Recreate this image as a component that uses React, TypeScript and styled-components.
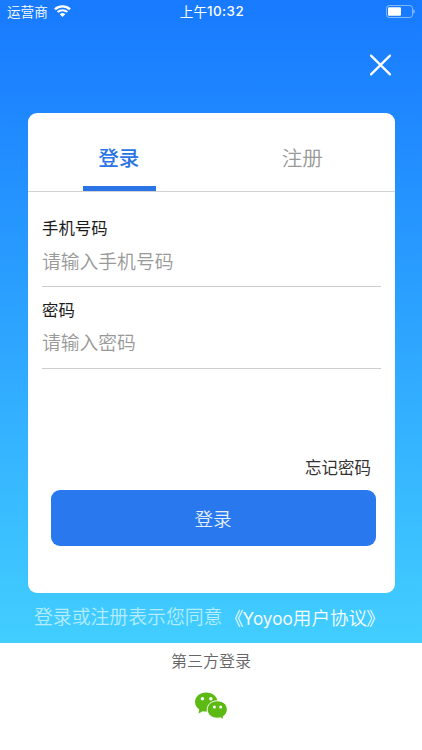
import React, { useState } from "react";
import styled, { createGlobalStyle } from "styled-components";

const Global = createGlobalStyle`
  * { box-sizing: border-box; }
  body { margin: 0; background: #fff; font-family: "Noto Sans CJK SC", sans-serif; }
  button, input { font: inherit; border: 0; background: none; padding: 0; margin: 0; }
`;

const Screen = styled.div`
  width: 422px;
  height: 750px;
  display: flex;
  flex-direction: column;
  overflow: hidden;
  background: #fff;
`;

const Hero = styled.main`
  height: 643px;
  display: flex;
  flex-direction: column;
  background: linear-gradient(#187aff 0%, #1f88ff 18%, #42ceff 100%);
`;

const StatusBar = styled.header`
  height: 24px;
  padding: 0 7px 2px 7px;
  display: grid;
  grid-template-columns: 1fr auto 1fr;
  align-items: center;
  color: #fff;
  font-size: 13.6px;
  line-height: 22px;
`;

const Carrier = styled.div`
  display: flex;
  align-items: center;
  gap: 6.5px;
  font-weight: 350;
`;

const Clock = styled.time`
  display: flex;
  padding-left: 2px;
  font-weight: 400;
`;

const Digits = styled.span`
  font-family: Inter, sans-serif;
  font-weight: 500;
  font-size: 13.4px;
  letter-spacing: 0.45px;
`;

const BatterySlot = styled.div`
  display: flex;
  justify-content: flex-end;
`;

const TopActions = styled.div`
  height: 89px;
  padding: 28px 29px 0 0;
  display: flex;
  justify-content: flex-end;
  align-items: flex-start;
`;

const CloseButton = styled.button`
  display: flex;
  width: 25px;
  height: 25px;
`;

const Card = styled.section`
  width: 367px;
  height: 479.5px;
  margin-left: 28px;
  border-radius: 9px;
  background: #fff;
  display: flex;
  flex-direction: column;
`;

const Tabs = styled.nav`
  height: 79px;
  display: grid;
  grid-template-columns: 1fr 1fr;
  border-bottom: 1.5px solid #d2d2d2;
`;

const Tab = styled.button<{ $active: boolean }>`
  display: flex;
  flex-direction: column;
  align-items: center;
  justify-content: space-between;
  padding-top: 29px;
  font-size: 20.6px;
  line-height: 30px;
  font-weight: ${(p) => (p.$active ? 500 : 350)};
  color: ${(p) => (p.$active ? "#2a74e6" : "#999")};

  &::after {
    content: "";
    width: 73px;
    height: 5px;
    background: ${(p) => (p.$active ? "#2a74e6" : "transparent")};
  }
`;

const TabLabel = styled.span`
  padding-right: 2px;
`;

const Fields = styled.div`
  padding: 21px 14px 0;
`;

const Field = styled.label`
  display: flex;
  flex-direction: column;
  height: 81.5px;
`;

const FieldName = styled.span`
  font-size: 16.4px;
  line-height: 28px;
  color: #1c1c1c;
`;

const Input = styled.input`
  width: 100%;
  height: 46px;
  padding: 0 0 6.5px;
  outline: 0;
  border-bottom: 1px solid #cdcdcd;
  font-size: 18.8px;
  font-weight: 350;
  color: #222;

  &::placeholder { color: #999; opacity: 1; }
`;

const Forgot = styled.button`
  align-self: flex-end;
  margin: 79px 24px 0 0;
  font-size: 16.5px;
  line-height: 24px;
  color: #333;
`;

const Submit = styled.button`
  width: 325px;
  height: 56px;
  margin: 11px auto 0 22.5px;
  padding-bottom: 1px;
  border-radius: 9px;
  background: #2978ed;
  color: #e4f0ff;
  font-size: 18.6px;
  font-weight: 350;
`;

const Terms = styled.p`
  margin: 0;
  padding: 8px 0 0 34px;
  display: flex;
  font-size: 18.85px;
  line-height: 30px;
  white-space: nowrap;
  font-weight: 350;
  color: #b3edff;
`;

const Agreement = styled.span`
  padding-top: 1px;
  margin-left: 2.5px;
  font-size: 18.6px;
  color: #f4fdff;
`;

const OpeningMark = styled.span`
  letter-spacing: -1px;
`;

const ClosingMark = styled.span`
  margin-left: -1px;
`;

const Latin = styled.span`
  font-family: Inter, sans-serif;
  font-weight: 400;
  font-size: 17.2px;
`;

const ThirdParty = styled.footer`
  height: 107px;
  padding-top: 5px;
  display: flex;
  flex-direction: column;
  align-items: center;
  font-size: 16px;
  line-height: 24px;
  font-weight: 350;
  color: #666;
`;

const WechatButton = styled.button`
  display: flex;
  margin-top: 20px;
`;

const WifiIcon = () => (
  <svg width="17" height="12" viewBox="0 0 16 12" preserveAspectRatio="none" fill="none" stroke="#fff">
    <path d="M.9 4.4a10 10 0 0 1 14.2 0" strokeWidth="2.3" />
    <path d="M3.5 7.1a6.4 6.4 0 0 1 9 0" strokeWidth="2.1" />
    <path d="M8 12 5.4 9.3a3.7 3.7 0 0 1 5.2 0Z" fill="#fff" stroke="none" />
  </svg>
);

const BatteryIcon = () => (
  <svg width="30" height="13" viewBox="0 0 30 13">
    <rect x="1.5" y="0.5" width="26" height="12" rx="2.8" fill="none" stroke="#fff" strokeOpacity="0.45" />
    <rect x="3" y="2.2" width="13" height="8.6" rx="1" fill="#fff" />
    <path d="M28.4 4.3c1.7.7 1.7 3.7 0 4.4Z" fill="#fff" fillOpacity="0.6" />
  </svg>
);

const CloseIcon = () => (
  <svg width="25" height="25" viewBox="0 0 25 25" stroke="#fff" strokeWidth="2.2" strokeLinecap="round">
    <path d="M3 3.6 22 22.4M22 3.6 3 22.4" />
  </svg>
);

const WechatIcon = () => (
  <svg width="34" height="28" viewBox="0 0 34 28">
    <path
      d="M12.2 .4C5.8.4 1 4.6 1 10c0 3.2 1.6 5.8 4.3 7.6L4.5 21.6l4.2-2.4c1.1.3 2.2.4 3.5.4 6.4 0 11.4-4.2 11.4-9.6S18.6.4 12.2.4Z"
      fill="#5dba14"
    />
    <path
      d="M23.3 8.8c-5.8 0-10.1 3.7-10.1 8.7s4.3 8.7 10.1 8.7c1.1 0 2.1-.1 3.1-.4l3.5 1.8-.8-3.1c2.6-1.6 4.2-4 4.2-7 0-5-4.2-8.7-10-8.7Z"
      fill="#5dba14"
      stroke="#fff"
      strokeWidth="1"
    />
    <g fill="#fff">
      <circle cx="8.4" cy="6.8" r="1.7" />
      <circle cx="16.8" cy="6.8" r="1.7" />
      <circle cx="20.4" cy="14.9" r="1.5" />
      <circle cx="26.7" cy="14.9" r="1.5" />
    </g>
  </svg>
);

export default function App() {
  const [active, setActive] = useState("登录");

  return (
    <>
      <Global />
      <Screen>
        <Hero>
          <StatusBar>
            <Carrier>
              运营商
              <WifiIcon />
            </Carrier>
            <Clock>
              上午<Digits>10:32</Digits>
            </Clock>
            <BatterySlot>
              <BatteryIcon />
            </BatterySlot>
          </StatusBar>
          <TopActions>
            <CloseButton aria-label="关闭">
              <CloseIcon />
            </CloseButton>
          </TopActions>
          <Card>
            <Tabs>
              {["登录", "注册"].map((name) => (
                <Tab key={name} $active={name === active} onClick={() => setActive(name)}>
                  <TabLabel>{name}</TabLabel>
                </Tab>
              ))}
            </Tabs>
            <Fields>
              <Field>
                <FieldName>手机号码</FieldName>
                <Input type="tel" placeholder="请输入手机号码" />
              </Field>
              <Field>
                <FieldName>密码</FieldName>
                <Input type="password" placeholder="请输入密码" />
              </Field>
            </Fields>
            <Forgot>忘记密码</Forgot>
            <Submit>登录</Submit>
          </Card>
          <Terms>
            登录或注册表示您同意
            <Agreement>
              <OpeningMark>《</OpeningMark>
              <Latin>Yoyoo</Latin>用户协议<ClosingMark>》</ClosingMark>
            </Agreement>
          </Terms>
        </Hero>
        <ThirdParty>
          第三方登录
          <WechatButton aria-label="微信登录">
            <WechatIcon />
          </WechatButton>
        </ThirdParty>
      </Screen>
    </>
  );
}
